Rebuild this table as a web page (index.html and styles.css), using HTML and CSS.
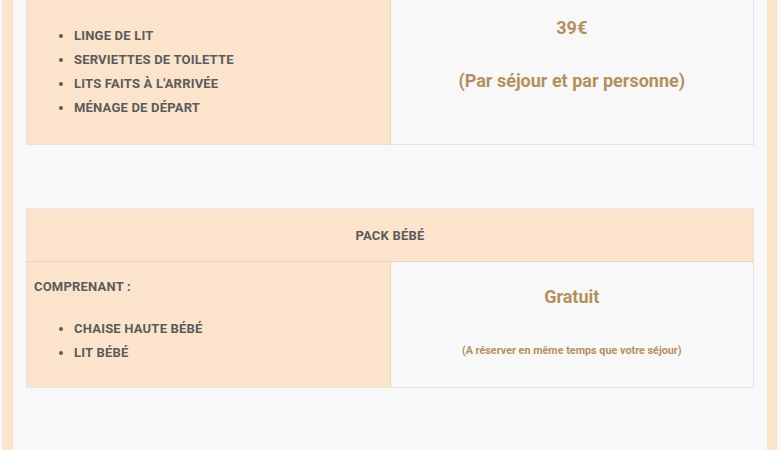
FILE: index.html
```html
<!DOCTYPE html>
<html>

	<head>
		<meta charset="utf-8" />
		<title>Services</title>
		<link rel="stylesheet" href="styles.css">
	</head>

	<body>
		<div id="page">
			<table class="pack first">
				<tr>
					<td class="left middle">
						<ul>
							<li>Linge de lit</li>
							<li>Serviettes de toilette</li>
							<li>Lits faits à l'arrivée</li>
							<li>Ménage de départ</li>
						</ul>
					</td>
					<td class="right">
						<p class="price">39€</p>
						<p class="info big">(Par séjour et par personne)</p>
					</td>
				</tr>
			</table>

			<table class="pack">
				<tr>
					<th colspan="2">Pack bébé</th>
				</tr>
				<tr class="row">
					<td class="left">
						<p class="label">Comprenant :</p>
						<ul>
							<li>Chaise haute bébé</li>
							<li>Lit bébé</li>
						</ul>
					</td>
					<td class="right">
						<p class="price free">Gratuit</p>
						<p class="info small">(A réserver en même temps que votre séjour)</p>
					</td>
				</tr>
			</table>
		</div>
	</body>

</html>
```

FILE: styles.css
```css
* {
	margin: 0;
	padding: 0;
	box-sizing: border-box;
}

body {
	background: #f8f8f8;
	font-family: Roboto, "Liberation Sans", sans-serif;
	padding: 0 3px 0 2px;
}

#page {
	background: #f8f8f8;
	border-left: 11px solid #fce4cc;
	border-right: 10px solid #fce4cc;
	padding: 0 13px 64px;
	min-height: 450px;
}

.pack {
	width: 100%;
	border-collapse: collapse;
	border: 1px solid #e3e3e3;
	table-layout: fixed;
	margin-bottom: 63px;
}

.first {
	margin-top: -1px;
}

.pack th {
	background: #fce4cc;
	height: 53px;
	font-size: 13px;
	font-weight: bold;
	letter-spacing: 0.2px;
	color: #5b5b5b;
	text-transform: uppercase;
	border-bottom: 1px solid #ecd3bd;
}

.pack td {
	padding: 8px 7px;
	vertical-align: top;
}

.first td {
	height: 145px;
}

.row td {
	height: 126px;
}

.left {
	background: #fce4cc;
	border-right: 1px solid #ecd3bd;
	color: #5b5b5b;
	font-size: 13px;
	font-weight: bold;
	letter-spacing: 0.2px;
	text-transform: uppercase;
}

td.middle {
	vertical-align: middle;
}

.left ul {
	padding-left: 40px;
	line-height: 24px;
}

.label {
	line-height: 24px;
	margin-top: 5px;
	margin-bottom: 18px;
}

.right {
	text-align: center;
	color: #b3905d;
	font-weight: bold;
}

.price {
	font-size: 18px;
	line-height: 24px;
	margin-top: 8px;
}

.free {
	margin-top: 15px;
}

.big {
	font-size: 18px;
	line-height: 24px;
	margin-top: 29px;
}

.small {
	font-size: 10.8px;
	line-height: 16px;
	margin-top: 34px;
}
```
